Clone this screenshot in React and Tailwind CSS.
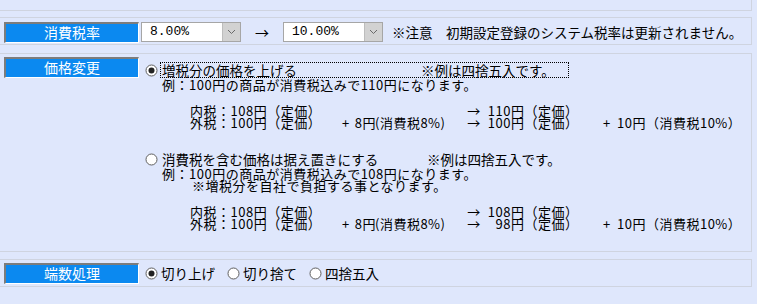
const jp = "font-['Noto_Sans_CJK_JP','Noto_Sans',sans-serif]"

function Label({ children }) {
  return (
    <div className="w-[135px] h-[21px] shrink-0 bg-[#0b89f0] border-t-2 border-l-2 border-b border-r border-t-[#7c7c7c] border-l-[#7c7c7c] border-b-white border-r-white text-white text-[14px] leading-[17px] text-center">
      {children}
    </div>
  )
}

function Radio({ checked }) {
  return (
    <svg width="13" height="13" viewBox="0 0 13 13" className="shrink-0">
      <circle cx="6.5" cy="6.5" r="5.5" fill="#fff" stroke="#5f5f5f" />
      {checked && <circle cx="6.5" cy="6.5" r="3" fill="#222" />}
    </svg>
  )
}

function Select({ value }) {
  return (
    <div className="w-[100px] h-[20px] flex border border-[#a6a6a6] bg-white">
      <span className="flex-1 pl-[8px] font-['Liberation_Mono',monospace] text-[13px] leading-[18px] text-black">{value}</span>
      <span className="w-[18px] bg-[#d2d2d2] border-l border-[#bdbdbd] flex items-center justify-center">
        <svg width="9" height="6" viewBox="0 0 9 6">
          <polyline points="1,1 4.5,4.5 8,1" fill="none" stroke="#6a6a6a" strokeWidth="1" />
        </svg>
      </span>
    </div>
  )
}

// tight 12px lines, like the reference
const tight = 'text-[13px] tracking-[0.5px] leading-[12px] h-[12px] whitespace-nowrap'

function ExRow({ a, tax, num, e }) {
  return (
    <div className={`flex pl-[51px] ${tight}`}>
      <span className="w-[150px]">{a}</span>
      <span className="w-[32px] pl-[2px] flex">
        {tax && <span>+</span>}
        {tax && <span className="ml-[5px]">{tax}</span>}
      </span>
      <span className="w-[92px] pl-[3px]">{tax && '(消費税8%)'}</span>
      <span className="w-[20px] text-center">→</span>
      <span className="w-[27px] text-right">{num}</span>
      <span className="w-[92px]">円（定価）</span>
      {e && <span className="w-[14px]">+</span>}
      {e && <span>{e}</span>}
    </div>
  )
}

export default function App() {
  return (
    <div className={`w-[757px] h-[304px] overflow-hidden bg-[#dfe7fc] text-black ${jp}`}>
      <div className="w-[752px] h-[11px] border-b border-r border-[#cfd4e0]" />

      {/* 消費税率 */}
      <div className="w-[752px] h-[28px] mt-[6px] flex items-start pt-[4px] pl-[4px] border-y border-r border-[#cfd4e0]">
        <Label>消費税率</Label>
        <div className="ml-[2px]">
          <Select value="8.00%" />
        </div>
        <span className="w-[42px] text-center text-[14px] leading-[20px]">→</span>
        <Select value="10.00%" />
        <span className="ml-[9px] text-[13.5px] leading-[20px] whitespace-nowrap">※注意　初期設定登録のシステム税率は更新されません。</span>
      </div>

      {/* 価格変更 */}
      <div className="w-[752px] h-[199px] mt-[8px] flex items-start pt-[3px] pl-[4px] border-y border-r border-[#cfd4e0]">
        <Label>価格変更</Label>
        <div className="pt-[5px] text-[13.5px]">
          <div className="flex items-center h-[16px] ml-[6px]">
            <Radio checked />
            <div className="ml-[2px] w-[409px] h-[16px] flex items-center border border-dotted border-black pl-[1px] leading-[14px] whitespace-nowrap">
              <span className="w-[259px]">増税分の価格を上げる</span>
              <span>※例は四捨五入です。</span>
            </div>
          </div>
          <div className={`mt-[1px] pl-[23px] ${tight}`}>例：100円の商品が消費税込みで110円になります。</div>
          <div className="h-[14px]" />
          <ExRow a="内税：108円（定価）" num="110" />
          <ExRow a="外税：100円（定価）" tax="8円" num="100" e="10円（消費税10%）" />

          <div className="flex items-center h-[16px] ml-[6px] mt-[22px]">
            <Radio />
            <div className="ml-[2px] h-[16px] flex items-center border border-transparent pl-[1px] leading-[14px] whitespace-nowrap">
              <span className="w-[265px]">消費税を含む価格は据え置きにする</span>
              <span>※例は四捨五入です。</span>
            </div>
          </div>
          <div className={`mt-[1px] pl-[23px] ${tight}`}>例：100円の商品が消費税込みで108円になります。</div>
          <div className={`pl-[53px] ${tight}`}>※増税分を自社で負担する事となります。</div>
          <div className="h-[14px]" />
          <ExRow a="内税：108円（定価）" num="108" />
          <ExRow a="外税：100円（定価）" tax="8円" num="98" e="10円（消費税10%）" />
        </div>
      </div>

      {/* 端数処理 */}
      <div className="w-[752px] h-[28px] mt-[7px] flex items-start pt-[3px] pl-[4px] border-y border-r border-[#cfd4e0]">
        <Label>端数処理</Label>
        <div className="h-[21px] ml-[6px] flex items-center gap-[12px] text-[13.5px] whitespace-nowrap">
          <label className="flex items-center">
            <Radio checked />
            <span className="ml-[3px]">切り上げ</span>
          </label>
          <label className="flex items-center">
            <Radio />
            <span className="ml-[3px]">切り捨て</span>
          </label>
          <label className="flex items-center">
            <Radio />
            <span className="ml-[3px]">四捨五入</span>
          </label>
        </div>
      </div>
    </div>
  )
}
